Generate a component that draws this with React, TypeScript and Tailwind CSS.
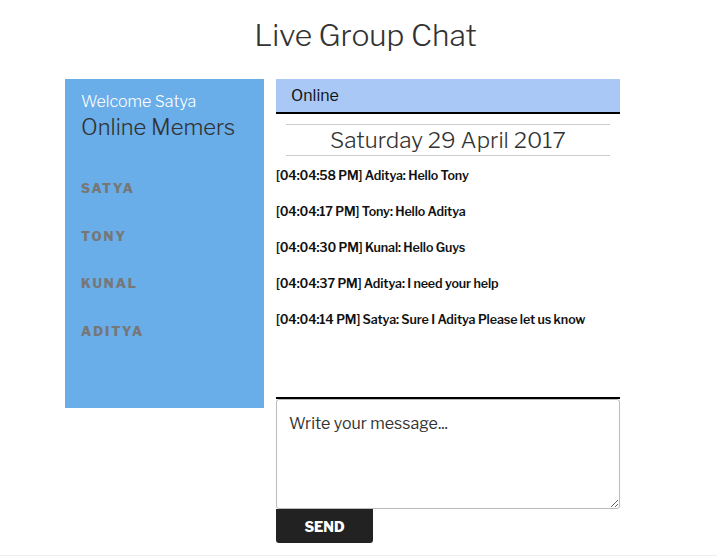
const members = ["Satya", "Tony", "Kunal", "Aditya"];

const messages = [
  { time: "04:04:58 PM", name: "Aditya", text: "Hello Tony" },
  { time: "04:04:17 PM", name: "Tony", text: "Hello Aditya" },
  { time: "04:04:30 PM", name: "Kunal", text: "Hello Guys" },
  { time: "04:04:37 PM", name: "Aditya", text: "I need your help" },
  { time: "04:04:14 PM", name: "Satya", text: "Sure I Aditya Please let us know" },
];

const Sidebar = () => {
  return (
    <div className="w-[199px] h-[329px] bg-[#69ade9] px-4 pt-[13px]">
      <p className="text-[16px] leading-[20px] text-white font-light">Welcome Satya</p>
      <p className="text-[22px] leading-[30px] text-[#333] font-light">Online Memers</p>
      <ul className="mt-[38px] flex flex-col gap-y-[30.5px]">
        {members.map((m) => (
          <li
            key={m}
            className="text-[13px] leading-[17px] font-extrabold uppercase tracking-[0.15em] text-[#777]"
          >
            {m}
          </li>
        ))}
      </ul>
    </div>
  );
};

const ChatPanel = () => {
  return (
    <div className="w-[344px] ml-[12px]">
      <div className="h-[35px] bg-[#a9c8f5] border-b-2 border-black pl-[15px] flex items-center">
        <p className="text-[16px] text-[#111] pt-px">Online</p>
      </div>
      <div className="h-[283px] flex flex-col">
        <div className="mx-[10px] mt-[10px] h-[32px] border-y border-[#ccc] flex items-center justify-center">
          <p className="text-[22.5px] leading-none font-light text-[#333] pt-px">Saturday 29 April 2017</p>
        </div>
        <div className="mt-[11px] flex flex-col gap-y-[18px]">
          {messages.map((msg, i) => (
            <p key={i} className="text-[12.5px] leading-[18px] font-semibold text-[#111] tracking-[-0.01em]">
              [{msg.time}] {msg.name}: {msg.text}
            </p>
          ))}
        </div>
      </div>
      <div className="border-t-2 border-black">
        <textarea
          placeholder="Write your message..."
          className="block w-full h-[110px] border border-[#bbb] rounded-[3px] px-3 py-[12px] text-[16px] text-[#333] placeholder:text-[#333] outline-none"
        />
        <button className="w-[97px] h-[34px] bg-[#222] text-white text-[14px] font-extrabold uppercase rounded-b-[3px]">
          Send
        </button>
      </div>
    </div>
  );
};

export default function App() {
  return (
    <div className="h-[556px] border-b border-[#eee] bg-white font-['Libre_Franklin','Open_Sans',sans-serif]">
      <h1 className="pt-[17px] pl-[14px] text-center text-[30px] leading-[36px] font-light text-[#333]">
        Live Group Chat
      </h1>
      <div className="flex pl-[65px] mt-[26px]">
        <Sidebar />
        <ChatPanel />
      </div>
    </div>
  );
}
